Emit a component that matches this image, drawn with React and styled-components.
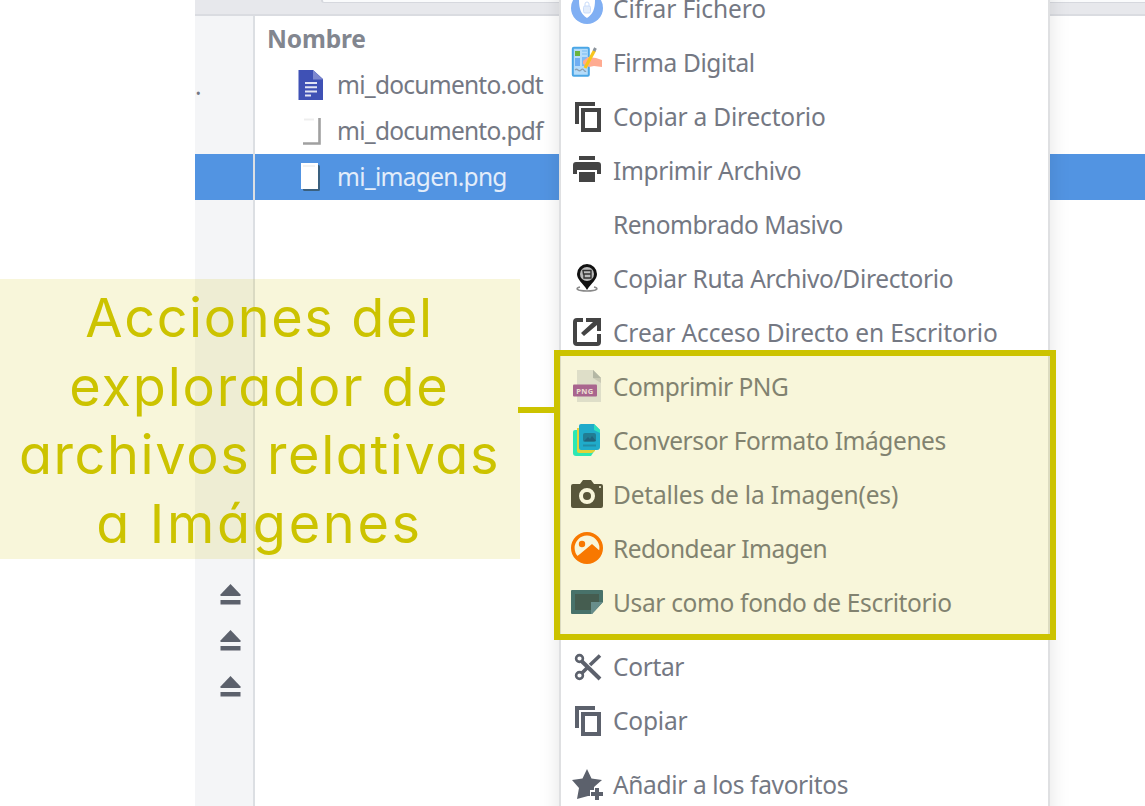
import React from 'react';
import styled, { createGlobalStyle } from 'styled-components';

const GlobalStyle = createGlobalStyle`
  * { box-sizing: border-box; }
  body { margin: 0; background: #fff; overflow: hidden; }
`;

const Page = styled.main`
  position: relative;
  width: 1145px;
  height: 806px;
  overflow: hidden;
  background: #fff;
  font-family: 'Noto Sans', sans-serif;
  font-size: 24.5px;
  color: #747883;
`;

const Explorer = styled.section`
  display: flex;
  flex-direction: column;
  height: 100%;
  margin-left: 195px;
`;

const Toolbar = styled.header`
  flex: none;
  height: 16px;
  padding-left: 126px;
  background: #e7e8ec;
  border-bottom: 2px solid #dadce1;
`;

const PathField = styled.div`
  height: 3px;
  background: #fafbfc;
  border: solid #d6d8de;
  border-width: 0 0 1px 2px;
  border-bottom-left-radius: 4px;
`;

const Body = styled.div`
  display: flex;
  flex: 1;
`;

const Sidebar = styled.aside`
  display: flex;
  flex-direction: column;
  width: 60px;
  background: #f4f5f7;
  border-right: 2px solid #dcdfe3;
`;

const Place = styled.div`
  display: flex;
  flex: none;
  align-items: center;
  height: 46px;
  padding-left: ${(p) => (p.$device ? 25 : 0)}px;
  background: ${(p) => (p.$selected ? '#5294e2' : 'transparent')};
`;

const PlaceGap = styled.div`
  height: ${(p) => p.$height}px;
`;

const Files = styled.div`
  flex: 1;
`;

const ColumnTitle = styled.div`
  height: 46px;
  padding-left: 12px;
  line-height: 46px;
  font-weight: 700;
  letter-spacing: -0.15px;
  color: #82868f;
`;

const FileRow = styled.div`
  display: flex;
  align-items: center;
  gap: 10px;
  height: 46px;
  padding-left: 40px;
  background: ${(p) => (p.$selected ? '#5294e2' : 'transparent')};
  color: ${(p) => (p.$selected ? '#e3edfa' : 'inherit')};
`;

const Label = styled.span`
  white-space: nowrap;
  line-height: 32px;
  letter-spacing: ${(p) => p.$spacing || 0}px;
`;

const Menu = styled.nav`
  position: absolute;
  top: -19px;
  left: 559px;
  width: 491px;
  height: 860px;
  background: #fff;
  border: solid #dfe0e2;
  border-width: 0 2px;
  box-shadow: 0 0 20px rgba(0, 0, 0, 0.11);
`;

const MenuItem = styled.div`
  display: flex;
  align-items: center;
  gap: 10px;
  height: 54px;
  padding-left: 10px;

  ${Label} {
    padding-top: 2px;
  }
`;

const MenuGap = styled.div`
  height: 10px;
`;

const Glyph = styled.svg`
  flex: none;
  width: 32px;
  height: 32px;
  overflow: visible;
`;

const Callout = styled.div`
  position: absolute;
  top: 279px;
  left: 0;
  width: 520px;
  height: 280px;
  padding-top: 5px;
  background: rgba(204, 195, 0, 0.145);
  color: #ccc300;
  font-family: Inter, sans-serif;
  font-feature-settings: 'cv11' 1;
  font-size: 54px;
  text-align: center;
`;

const CalloutLine = styled.div`
  height: 68.6px;
  line-height: 68.6px;
  white-space: nowrap;
  padding-right: 1px;
  letter-spacing: ${(p) => p.$spacing || 0}px;
`;

const Connector = styled.div`
  position: absolute;
  top: 407px;
  left: 518px;
  width: 37px;
  height: 6px;
  background: #ccc300;
`;

const Frame = styled.div`
  position: absolute;
  top: 350px;
  left: 554px;
  width: 502px;
  height: 290px;
  border: 6px solid #ccc300;
  background: rgba(204, 195, 0, 0.145);
  background-clip: padding-box;
`;

const Icon = ({ children }) => <Glyph viewBox="0 0 32 32">{children}</Glyph>;

const CopyIcon = ({ color = '#444' }) => (
  <Icon>
    <path d="M24 4H6V24" fill="none" stroke={color} strokeWidth="4" />
    <rect x="12" y="10" width="16" height="20" fill="none" stroke={color} strokeWidth="4" />
  </Icon>
);

const EncryptIcon = () => (
  <Icon>
    <circle cx="16" cy="16" r="16" fill="#80aff3" />
    <path d="M16 5c3 2 6 3 8 3 0 9-2 14-8 18-6-4-8-9-8-18 2 0 5-1 8-3z" fill="#fff" />
    <rect x="12.5" y="14" width="7" height="7" rx="1.5" fill="#e3edfc" stroke="#c9dcfa" />
    <path d="M14 14v-2a2 2 0 0 1 4 0v2" fill="none" stroke="#c9dcfa" />
  </Icon>
);

const SignIcon = () => (
  <Icon>
    <rect x="1.8" y="1.8" width="16" height="28" rx="1" fill="#b5dcfa" stroke="#4aa6e6" strokeWidth="2" />
    <rect x="4" y="5" width="5" height="5" fill="#6ab43e" />
    <path d="M11 5h5M11 8h5" stroke="#8cc6f5" strokeWidth="1.6" />
    <rect x="4" y="12" width="5" height="8" fill="#6faef2" />
    <rect x="11" y="11" width="5" height="9" fill="#7fbaf5" />
    <path d="M4 24c3-3 3 3 6 0s3 3 5 1" fill="none" stroke="#8aa0b4" strokeWidth="1.2" />
    <path d="M12 15l5-4 8 1 6 2v7l-8-1-5 1-6-3z" fill="#ffab91" />
    <path d="M14 22L23.500 4.500" stroke="#f8c51c" strokeWidth="3.2" />
    <path d="M23 5l1.500-3" stroke="#8a929b" strokeWidth="3" />
  </Icon>
);

const PrintIcon = () => (
  <Icon>
    <rect x="8" y="2" width="16" height="4" fill="#444" />
    <path d="M5 8h22a3 3 0 0 1 3 3v9h-4v-4H6v4H2v-9a3 3 0 0 1 3-3z" fill="#444" />
    <rect x="8" y="18" width="16" height="10" fill="#444" />
  </Icon>
);

const PinIcon = () => (
  <Icon>
    <path d="M9 25c-5 1-4 4 7 4s12-3 7-4" fill="none" stroke="#888" strokeWidth="1.5" />
    <path d="M16 2a10 10 0 0 0-10 10c0 6 6 9 10 16 4-7 10-10 10-16A10 10 0 0 0 16 2z" fill="#111" />
    <circle cx="16" cy="12" r="7" fill="#bbb" />
    <path d="M12 8.5h8v3.5h-7.5zM13 12v4h7v-4" fill="none" stroke="#333" strokeWidth="1.4" />
  </Icon>
);

const ShortcutIcon = () => (
  <Icon>
    <path d="M12 4H6a2 2 0 0 0-2 2v20a2 2 0 0 0 2 2h20a2 2 0 0 0 2-2V18" fill="none" stroke="#444" strokeWidth="4" />
    <path d="M15 2h15v13h-4V9L13 20l-3-3L22 6h-7z" fill="#444" />
  </Icon>
);

const PngIcon = () => (
  <Icon>
    <path d="M6 0h16l8 9v23H6z" fill="#e1e3ea" />
    <path d="M22 0l8 8v5l-8-5z" fill="#c8cbd3" />
    <path d="M22 0l8 8h-8z" fill="#b0b6c0" />
    <rect x="2" y="14.5" width="24" height="12" rx="1" fill="#a356a7" />
    <text x="14" y="23.5" textAnchor="middle" fontSize="7.5" fontWeight="700" fill="#f2e4f5" letterSpacing=".4">PNG</text>
  </Icon>
);

const ConvertIcon = () => (
  <Icon>
    <path d="M4 6h16v26H5a3 3 0 0 1-3-3V8a2 2 0 0 1 2-2z" fill="#11efd3" />
    <path d="M20 26h4l-4 6z" fill="#11efd3" />
    <path d="M6 4h18v23l-3 2H8a2 2 0 0 1-2-2z" fill="#e3d746" />
    <path d="M10 0h13l6 6v17a3 3 0 0 1-3 3H10a2 2 0 0 1-2-2V2a2 2 0 0 1 2-2z" fill="#03a8ed" />
    <path d="M23 0l6 6v3l-6-3z" fill="#11e5dd" />
    <rect x="12" y="9" width="13" height="9" rx="2" fill="#0472ac" />
    <path d="M13 17l4-4 2 2 2-3 4 5z" fill="#035593" />
    <path d="M12 21.5h13" stroke="#0485c4" strokeWidth="2" />
  </Icon>
);

const CameraIcon = () => (
  <Icon>
    <path d="M2 6h7l3-4h8l3 4h7a2 2 0 0 1 2 2v20a2 2 0 0 1-2 2H2a2 2 0 0 1-2-2V8a2 2 0 0 1 2-2z" fill="#444" />
    <circle cx="16" cy="18" r="6" fill="none" stroke="#fff" strokeWidth="4" />
    <circle cx="29" cy="9" r="1" fill="#fff" />
  </Icon>
);

const RoundImageIcon = () => (
  <Icon>
    <circle cx="16" cy="16" r="14.2" fill="#fff" stroke="#ff6c00" strokeWidth="3.6" />
    <circle cx="11" cy="12" r="3.2" fill="#ff6c00" />
    <path d="M5 25l4-3 12-10 8 7-3 8-10 4-8-3z" fill="#ff6c00" />
  </Icon>
);

const WallpaperIcon = () => (
  <Icon>
    <path d="M1 4h30a1 1 0 0 1 1 1v11L21 28H1a1 1 0 0 1-1-1V5a1 1 0 0 1 1-1z" fill="#32657c" />
    <path d="M4 8h24v8h-8v8H4z" fill="#2e4d5e" />
    <path d="M20 16h12L21 28h-1z" fill="#5786a3" />
  </Icon>
);

const ScissorsIcon = () => (
  <Icon>
    <g fill="none" stroke="#5c616c">
      <circle cx="8.5" cy="8.5" r="3.4" strokeWidth="2.6" />
      <circle cx="8.5" cy="25.5" r="3.4" strokeWidth="2.6" />
      <path d="M10.5 11L29 29" strokeWidth="4" />
      <path d="M10.5 23.5l6-6M19 15L29 5.5" strokeWidth="3.6" />
    </g>
  </Icon>
);

const FavoriteIcon = () => (
  <Icon>
    <path d="M16 1l4.5 9.5L31 12l-8 7 0 3h-4v6h-2L6 31l2-11L1 12l10.5-1.5z" fill="#5c616c" />
    <path d="M26 20v12M20 26h12" stroke="#5c616c" strokeWidth="4" />
  </Icon>
);

const EjectIcon = () => (
  <svg width="21" height="21" viewBox="0 0 21 21">
    <path d="M10.5 0L20.5 10.5V12H.5V10.5z" fill="#5c616c" />
    <rect x=".5" y="16" width="20" height="4.5" fill="#5c616c" />
  </svg>
);

const OdtIcon = () => (
  <Icon>
    <path d="M3.5 1H18l10 9v21h-24.5z" fill="#3f51b5" />
    <path d="M18 1l10 9.5H18z" fill="#7d88cf" />
    <path d="M10 14h12M10 18.3h12M10 22.6h12M10 26.5h6" stroke="#e1e4f4" strokeWidth="2" />
  </Icon>
);

const PdfIcon = () => (
  <Icon>
    <path d="M8 28.500h16.500V3" fill="none" stroke="#a0a0a0" strokeWidth="2.6" />
    <path d="M9 4.500h10" stroke="#eee" strokeWidth="2" />
  </Icon>
);

const PngFileIcon = () => (
  <Icon>
    <rect x="8" y="4" width="17" height="26" rx="1.5" fill="#3a607f" />
    <rect x="6" y="2" width="17" height="26" fill="#fff" />
    <path d="M8 5h12" stroke="#eee" strokeWidth="1.5" />
  </Icon>
);

const files = [
  { name: 'mi_documento.odt', icon: <OdtIcon />, spacing: -0.74 },
  { name: 'mi_documento.pdf', icon: <PdfIcon />, spacing: -0.74 },
  { name: 'mi_imagen.png', icon: <PngFileIcon />, spacing: -0.71, selected: true },
];

const menuGroups = [
  [
    { text: 'Cifrar Fichero', icon: <EncryptIcon />, spacing: -0.09 },
    { text: 'Firma Digital', icon: <SignIcon />, spacing: -0.38 },
    { text: 'Copiar a Directorio', icon: <CopyIcon />, spacing: -0.2 },
    { text: 'Imprimir Archivo', icon: <PrintIcon />, spacing: -0.37 },
    { text: 'Renombrado Masivo', icon: <Icon />, spacing: -0.48 },
    { text: 'Copiar Ruta Archivo/Directorio', icon: <PinIcon />, spacing: -0.34 },
    { text: 'Crear Acceso Directo en Escritorio', icon: <ShortcutIcon />, spacing: -0.11 },
    { text: 'Comprimir PNG', icon: <PngIcon />, spacing: -0.49 },
    { text: 'Conversor Formato Imágenes', icon: <ConvertIcon />, spacing: -0.42 },
    { text: 'Detalles de la Imagen(es)', icon: <CameraIcon />, spacing: -0.19 },
    { text: 'Redondear Imagen', icon: <RoundImageIcon />, spacing: -0.5 },
    { text: 'Usar como fondo de Escritorio', icon: <WallpaperIcon />, spacing: -0.35 },
  ],
  [
    { text: 'Cortar', icon: <ScissorsIcon />, spacing: -0.33 },
    { text: 'Copiar', icon: <CopyIcon color="#5c616c" />, spacing: -0.17 },
  ],
  [{ text: 'Añadir a los favoritos', icon: <FavoriteIcon />, spacing: -0.36 }],
];

const calloutLines = [
  { text: 'Acciones del', spacing: 1.6 },
  { text: 'explorador de', spacing: 1.85 },
  { text: 'archivos relativas', spacing: 1.6 },
  { text: 'a Imágenes', spacing: 2.7 },
];

export default function App() {
  return (
    <Page>
      <GlobalStyle />
      <Explorer>
        <Toolbar>
          <PathField />
        </Toolbar>
        <Body>
          <Sidebar>
            <PlaceGap $height={46} />
            <Place>.</Place>
            <PlaceGap $height={46} />
            <Place $selected />
            <PlaceGap $height={371} />
            <Place $device><EjectIcon /></Place>
            <Place $device><EjectIcon /></Place>
            <Place $device><EjectIcon /></Place>
          </Sidebar>
          <Files>
            <ColumnTitle>Nombre</ColumnTitle>
            {files.map((f) => (
              <FileRow key={f.name} $selected={f.selected}>
                {f.icon}
                <Label $spacing={f.spacing}>{f.name}</Label>
              </FileRow>
            ))}
          </Files>
        </Body>
      </Explorer>
      <Menu>
        {menuGroups.map((group, i) => (
          <React.Fragment key={i}>
            {i > 0 && <MenuGap />}
            {group.map((item) => (
              <MenuItem key={item.text}>
                {item.icon}
                <Label $spacing={item.spacing}>{item.text}</Label>
              </MenuItem>
            ))}
          </React.Fragment>
        ))}
      </Menu>
      <Callout>
        {calloutLines.map((l) => (
          <CalloutLine key={l.text} $spacing={l.spacing}>{l.text}</CalloutLine>
        ))}
      </Callout>
      <Frame />
      <Connector />
    </Page>
  );
}
